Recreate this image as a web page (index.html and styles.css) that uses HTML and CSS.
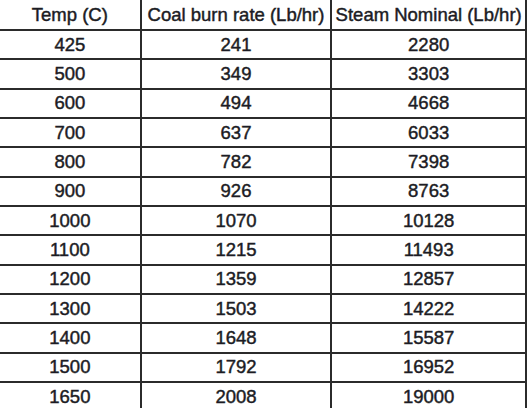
FILE: index.html
```html
<!DOCTYPE html>
<html>
<head>
  <link rel="stylesheet" href="styles.css">
</head>
<body>
  <table class="rates">
    <colgroup>
      <col class="col-temp">
      <col class="col-coal">
      <col class="col-steam">
    </colgroup>
    <thead>
      <tr>
        <th>Temp (C)</th>
        <th>Coal burn rate (Lb/hr)</th>
        <th>Steam Nominal (Lb/hr)</th>
      </tr>
    </thead>
    <tbody>
      <tr><td>425</td><td>241</td><td>2280</td></tr>
      <tr><td>500</td><td>349</td><td>3303</td></tr>
      <tr><td>600</td><td>494</td><td>4668</td></tr>
      <tr><td>700</td><td>637</td><td>6033</td></tr>
      <tr><td>800</td><td>782</td><td>7398</td></tr>
      <tr><td>900</td><td>926</td><td>8763</td></tr>
      <tr><td>1000</td><td>1070</td><td>10128</td></tr>
      <tr><td>1100</td><td>1215</td><td>11493</td></tr>
      <tr><td>1200</td><td>1359</td><td>12857</td></tr>
      <tr><td>1300</td><td>1503</td><td>14222</td></tr>
      <tr><td>1400</td><td>1648</td><td>15587</td></tr>
      <tr><td>1500</td><td>1792</td><td>16952</td></tr>
      <tr><td>1650</td><td>2008</td><td>19000</td></tr>
    </tbody>
  </table>
</body>
</html>
```

FILE: styles.css
```css
body {
  margin: 0;
  background: #fff;
  font-family: "Liberation Sans", Arial, sans-serif;
  overflow: hidden;
}
.rates {
  border-collapse: collapse;
  table-layout: fixed;
  margin: -2px 0 0 -2px;
  color: #1c1c24;
  font-size: 18.5px;
}
.col-temp {
  width: 142px;
}
.col-coal {
  width: 191px;
}
.col-steam {
  width: 195px;
}
.rates th,
.rates td {
  border: 2px solid #2b2b2b;
  padding: 0;
  text-align: center;
  font-weight: normal;
  -webkit-text-stroke: 0.45px #1c1c24;
}
.rates th {
  height: 29px;
}
.rates td {
  height: 27.33px;
}
```
